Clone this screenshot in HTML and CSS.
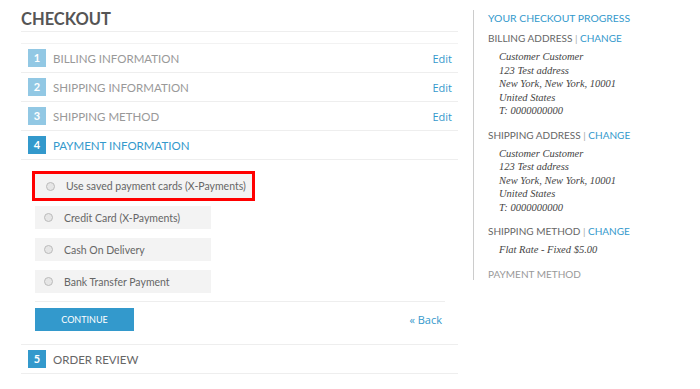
FILE: index.html
```html
<!DOCTYPE html>
<html lang="en">
<head>
  <meta charset="UTF-8" />
  <title>Checkout</title>
  <link rel="stylesheet" href="styles.css">
</head>
<body>
  <div class="page">
    <div class="main">
      <h1 class="title">CHECKOUT</h1>
      <ul class="steps">
        <li class="step done">
          <span class="num">1</span><span class="name">BILLING INFORMATION</span><a class="edit" href="#">Edit</a>
        </li>
        <li class="step done">
          <span class="num">2</span><span class="name">SHIPPING INFORMATION</span><a class="edit" href="#">Edit</a>
        </li>
        <li class="step done">
          <span class="num">3</span><span class="name">SHIPPING METHOD</span><a class="edit" href="#">Edit</a>
        </li>
        <li class="step active">
          <div class="step-head"><span class="num">4</span><span class="name">PAYMENT INFORMATION</span></div>
          <div class="step-body">
            <div class="methods">
              <label class="method highlight"><span class="radio"></span>Use saved payment cards (X-Payments)</label>
              <label class="method"><span class="radio"></span>Credit Card (X-Payments)</label>
              <label class="method"><span class="radio"></span>Cash On Delivery</label>
              <label class="method"><span class="radio"></span>Bank Transfer Payment</label>
            </div>
            <div class="actions">
              <button class="btn">CONTINUE</button>
              <a class="back" href="#">&laquo; Back</a>
            </div>
          </div>
        </li>
        <li class="step todo">
          <span class="num">5</span><span class="name">ORDER REVIEW</span>
        </li>
      </ul>
    </div>

    <div class="side">
      <h3 class="side-title">YOUR CHECKOUT PROGRESS</h3>
      <div class="block">
        <div class="block-head">BILLING ADDRESS <span class="sep">|</span> <a href="#">CHANGE</a></div>
        <address>
          Customer Customer<br>
          123 Test address<br>
          New York, New York, 10001<br>
          United States<br>
          T: 0000000000
        </address>
      </div>
      <div class="block">
        <div class="block-head">SHIPPING ADDRESS <span class="sep">|</span> <a href="#">CHANGE</a></div>
        <address>
          Customer Customer<br>
          123 Test address<br>
          New York, New York, 10001<br>
          United States<br>
          T: 0000000000
        </address>
      </div>
      <div class="block">
        <div class="block-head">SHIPPING METHOD <span class="sep">|</span> <a href="#">CHANGE</a></div>
        <address>Flat Rate - Fixed $5.00</address>
      </div>
      <div class="block">
        <div class="block-head muted">PAYMENT METHOD</div>
      </div>
    </div>
  </div>
</body>
</html>
```

FILE: styles.css
```css
body {
  margin: 0;
  font-family: Lato, "Open Sans", sans-serif;
  color: #666;
  background: #fff;
}
a {
  color: #3399cc;
  text-decoration: none;
}
.page {
  display: flex;
  padding: 8px 0 0 21px;
}
.main {
  width: 437px;
}
.title {
  margin: 0;
  padding: 1px 0 2px;
  font-size: 16.5px;
  font-weight: 700;
  color: #555;
  border-bottom: 1px solid #eee;
  line-height: 20px;
}
.steps {
  list-style: none;
  margin: 11px 0 0;
  padding: 0;
  border-top: 1px solid #f2f2f2;
}
.step {
  border-bottom: 1px solid #eee;
}
.step.done,
.step.todo,
.step-head {
  display: flex;
  align-items: center;
  height: 28px;
  padding-left: 7px;
}
.num {
  width: 18px;
  height: 18px;
  line-height: 18px;
  text-align: center;
  color: #fff;
  font-size: 11px;
  font-weight: 700;
  background: #92c8e4;
  margin-right: 7px;
}
.name {
  font-size: 11.5px;
  color: #999;
  flex: 1;
}
.edit {
  font-family: "Open Sans", sans-serif;
  font-size: 11px;
  margin-right: 6px;
}
.active .num,
.todo .num {
  background: #3399cc;
}
.active .name {
  color: #3399cc;
}
.todo .name {
  color: #666;
}
.step-body {
  border-top: 1px solid #eee;
  padding: 14px 13px 13px 14px;
}
.methods {
  display: flex;
  flex-direction: column;
  align-items: flex-start;
  gap: 9px;
  padding-bottom: 8px;
  border-bottom: 1px solid #eee;
}
.method {
  display: flex;
  align-items: center;
  width: 176px;
  height: 23px;
  padding-left: 9px;
  box-sizing: border-box;
  background: #f3f3f3;
  font-size: 10.5px;
  color: #666;
  white-space: nowrap;
}
.method.highlight {
  width: 223px;
  height: 30px;
  padding-left: 11px;
  border: 3px solid #f00;
  margin: -3px 0 -4px -3px;
}
.radio {
  width: 7px;
  height: 7px;
  border-radius: 50%;
  border: 1px solid #bbb;
  background: #e6e6e6;
  margin-right: 11px;
}
.actions {
  display: flex;
  justify-content: space-between;
  align-items: center;
  padding-top: 6px;
}
.btn {
  width: 99px;
  height: 23px;
  border: none;
  background: #3399cc;
  color: #fff;
  font-family: Lato, sans-serif;
  font-size: 9px;
  cursor: pointer;
}
.back {
  font-family: "Open Sans", sans-serif;
  font-size: 11px;
  margin-right: 3px;
}
.side {
  margin-left: 15px;
  margin-top: 2px;
  height: 270px;
  border-left: 1px solid #ccc;
  padding-left: 14px;
}
.side-title {
  margin: 2px 0 0;
  font-size: 10.4px;
  font-weight: 400;
  color: #3399cc;
}
.block {
  margin-top: 11px;
}
.side-title + .block {
  margin-top: 8px;
}
.block-head {
  font-size: 10px;
  color: #666;
}
.block-head.muted {
  color: #999;
}
.sep {
  color: #aaa;
}
address {
  margin: 6px 0 0 11px;
  font-family: "Liberation Serif", serif;
  font-style: italic;
  font-size: 10.5px;
  line-height: 13.5px;
  color: #444;
}
```
